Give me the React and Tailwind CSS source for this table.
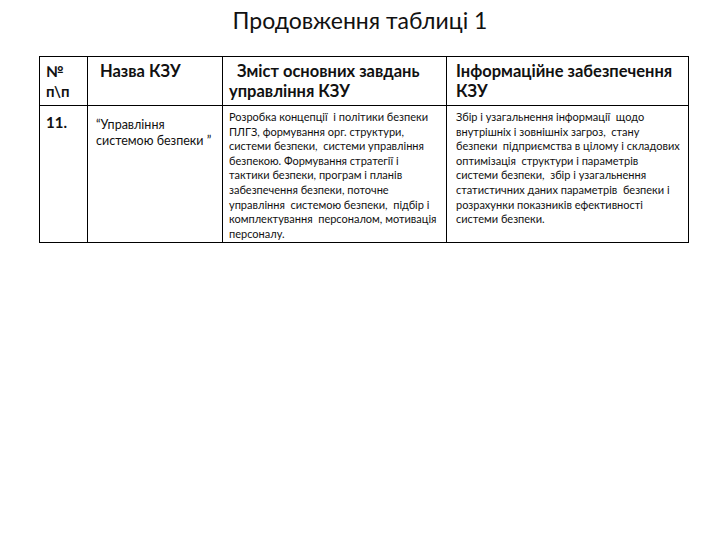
const content = [
  "Розробка концепції  і політики безпеки",
  "ПЛГЗ, формування орг. структури,",
  "системи безпеки,  системи управління",
  "безпекою. Формування стратегії і",
  "тактики безпеки, програм і планів",
  "забезпечення безпеки, поточне",
  "управління  системою безпеки,  підбір і",
  "комплектування  персоналом, мотивація",
  "персоналу.",
];

const info = [
  "Збір і узагальнення інформації  щодо",
  "внутрішніх і зовнішніх загроз,  стану",
  "безпеки  підприємства в цілому і складових",
  "оптимізація  структури і параметрів",
  "системи безпеки,  збір і узагальнення",
  "статистичних даних параметрів  безпеки і",
  "розрахунки показників ефективності",
  "системи безпеки.",
];

const Lines = ({ items }) => (
  <>
    {items.map((line, i) => (
      <div key={i} className="whitespace-pre">
        {line}
      </div>
    ))}
  </>
);

export default function App() {
  return (
    <div className="w-[720px] h-[540px] bg-white text-[#111] font-['Lato','Open_Sans',sans-serif]">
      <h1 className="pt-[6px] h-[56px] text-center text-[23px] leading-[28px] font-normal">
        Продовження таблиці 1
      </h1>
      <table className="ml-[39px] w-[649px] border-collapse table-fixed">
        <colgroup>
          <col className="w-[48px]" />
          <col className="w-[135px]" />
          <col className="w-[224px]" />
          <col className="w-[242px]" />
        </colgroup>
        <thead>
          <tr className="h-[49px] align-top text-[16.5px] leading-[20px] font-bold">
            <th className="border border-black px-[6px] pt-[4px] text-left font-bold text-[15px]">
              №
              <br />
              п\п
            </th>
            <th className="border border-black pl-[12px] pt-[4px] text-left font-bold">
              Назва КЗУ
            </th>
            <th className="border border-black pl-[6px] pt-[4px] text-left font-bold whitespace-pre">
              {"  Зміст основних завдань\nуправління КЗУ"}
            </th>
            <th className="border border-black pl-[9px] pt-[4px] text-left font-bold">
              Інформаційне забезпечення
              <br />
              КЗУ
            </th>
          </tr>
        </thead>
        <tbody>
          <tr className="h-[137px] align-top">
            <td className="border border-black px-[6px] pt-[7px] text-[15px] leading-[19px] font-bold">
              11.
            </td>
            <td className="border border-black pl-[8px] pt-[11px] text-[12.5px] leading-[16px]">
              “Управління
              <br />
              системою безпеки ”
            </td>
            <td className="border border-black pl-[6px] pt-[4px] text-[11px] leading-[14.6px]">
              <Lines items={content} />
            </td>
            <td className="border border-black pl-[9px] pt-[4px] text-[11px] leading-[14.6px]">
              <Lines items={info} />
            </td>
          </tr>
        </tbody>
      </table>
    </div>
  );
}
